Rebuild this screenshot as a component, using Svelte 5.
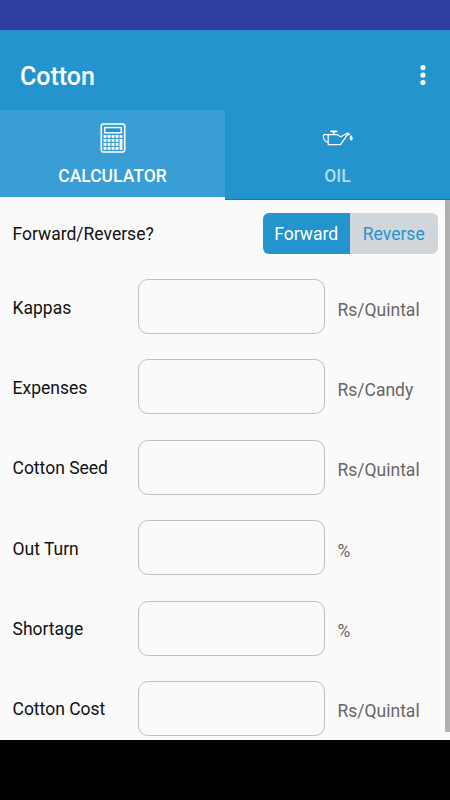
<script>
	let direction = $state("Forward");
	let tab = $state("Calculator");

	const fields = [
		{ name: "Kappas", unit: "Rs/Quintal" },
		{ name: "Expenses", unit: "Rs/Candy" },
		{ name: "Cotton Seed", unit: "Rs/Quintal" },
		{ name: "Out Turn", unit: "%" },
		{ name: "Shortage", unit: "%" },
		{ name: "Cotton Cost", unit: "Rs/Quintal" }
	];

	const keys = [0, 1, 2, 3, 4];
</script>

<div class="app">
	<div class="status"></div>

	<header>
		<h1>Cotton</h1>
		<button class="more" aria-label="More options">
			<svg width="6" height="20" viewBox="0 0 6 20" fill="#fff">
				<circle cx="3" cy="2.6" r="2.6" />
				<circle cx="3" cy="10" r="2.6" />
				<circle cx="3" cy="17.5" r="2.6" />
			</svg>
		</button>
	</header>

	<nav>
		<button class="tab" class:active={tab === "Calculator"} onclick={() => (tab = "Calculator")}>
			<svg width="26" height="30" viewBox="0 0 26 30">
				<rect x="1.3" y="1" width="23.4" height="28" rx="2" fill="none" stroke="#fff" stroke-width="1.6" />
				<rect x="4.8" y="4.6" width="16.4" height="5.2" fill="#2494cf" stroke="#fff" stroke-width="1.4" />
				{#each keys as col}
					{#each keys.slice(0, 4) as row}
						{#if col < 4 || row === 0}
							<rect x={3.6 + col * 4} y={12 + row * 4} width="2.8" height="2.8" fill="#fff" />
						{/if}
					{/each}
				{/each}
				<rect x="19.6" y="16" width="2.8" height="10.8" fill="#fff" />
			</svg>
			<span>CALCULATOR</span>
		</button>
		<button class="tab" class:active={tab === "Oil"} onclick={() => (tab = "Oil")}>
			<svg width="32" height="30" viewBox="0 0 32 30" fill="none" stroke="#fff" stroke-width="1.2">
				<path d="M6.2 11.7v9.9h12.3l6.8-9.8 2.1-.2-1.5-1.6-7.2 3.9-3.4-2.2z" />
				<path d="M6.2 12L3 11.4Q1.3 11.4 1.4 14q.5 4.3 4.6 5.4" />
				<path d="M8.3 8.4h7M11.8 8.6v3" stroke-width="1.7" />
				<path d="M29.2 12.6q-2.3 4 0 4.6 2.3-.6 0-4.6z" fill="#fff" stroke-width=".8" />
			</svg>
			<span>OIL</span>
		</button>
	</nav>

	<main>
		<div class="form">
			<div class="mode">
				<p>Forward/Reverse?</p>
				<div class="segments">
					{#each ["Forward", "Reverse"] as name}
						<button class:selected={direction === name} onclick={() => (direction = name)}>{name}</button>
					{/each}
				</div>
			</div>

			{#each fields as field}
				<label class="field">
					<span class="name">{field.name}</span>
					<input type="text" inputmode="decimal" />
					<span class="unit">{field.unit}</span>
				</label>
			{/each}
		</div>
		<div class="scrollbar"></div>
	</main>

	<div class="navbar"></div>
</div>

<style>
	:global(body) {
		margin: 0;
	}

	.app {
		display: flex;
		flex-direction: column;
		width: 450px;
		height: 800px;
		overflow: hidden;
		font-family: Roboto, sans-serif;
		font-size: 17.5px;
		background: #fafafa;
	}

	button {
		margin: 0;
		padding: 0;
		border: 0;
		background: none;
		font: inherit;
	}

	.status {
		flex: none;
		height: 30px;
		background: #303e9f;
	}

	header {
		flex: none;
		display: flex;
		justify-content: space-between;
		align-items: center;
		height: 80px;
		box-sizing: border-box;
		padding: 12px 24.5px 0 20px;
		background: #2494cf;
		color: #fff;
	}

	h1 {
		margin: 0;
		font-size: 25px;
		font-weight: 500;
	}

	.more {
		height: 20px;
		line-height: 0;
		margin-bottom: 2px;
	}

	nav {
		flex: none;
		display: flex;
		height: 90px;
	}

	.tab {
		flex: 1;
		display: flex;
		flex-direction: column;
		align-items: center;
		box-sizing: border-box;
		padding-top: 13px;
		background: #2494cf;
		border-bottom: 1px solid #087dc1;
		color: #b5dbf0;
		font-weight: 500;
	}

	.tab span {
		margin-top: 13px;
		line-height: 21px;
	}

	.tab.active {
		background: #399ed5;
		background-clip: padding-box;
		border-bottom: 3px solid #fafafa;
		color: #fff;
	}

	main {
		flex: none;
		display: flex;
		height: 540px;
		overflow: hidden;
	}

	.form {
		flex: 1;
		padding: 12.5px 0 0 12.5px;
	}

	.mode {
		display: flex;
		justify-content: space-between;
		align-items: center;
		height: 41px;
		margin-bottom: 25.5px;
		padding-right: 7.5px;
	}

	p {
		margin: 0;
		padding-top: 2px;
		color: #111;
	}

	.segments {
		display: flex;
		width: 175px;
		height: 41px;
		border-radius: 6px;
		overflow: hidden;
	}

	.segments button {
		flex: 1;
		padding-top: 2px;
		background: #d1d6da;
		color: #2494cf;
	}

	.segments .selected {
		background: #2494cf;
		color: #fff;
	}

	.field {
		display: flex;
		align-items: center;
		height: 55px;
		margin-bottom: 25.4px;
	}

	.name {
		width: 125px;
		padding-top: 2px;
		color: #111;
	}

	input {
		width: 187.5px;
		height: 55px;
		box-sizing: border-box;
		margin: 0;
		padding: 0 12px;
		border: 1px solid #c0c0c0;
		border-radius: 10px;
		background: transparent;
		font: inherit;
		outline: none;
	}

	.unit {
		padding: 6px 0 0 12.5px;
		color: #666;
	}

	.scrollbar {
		width: 5px;
		height: 531.5px;
		background: #b0b0b0;
	}

	.navbar {
		flex: none;
		height: 60px;
		background: #000;
	}
</style>
